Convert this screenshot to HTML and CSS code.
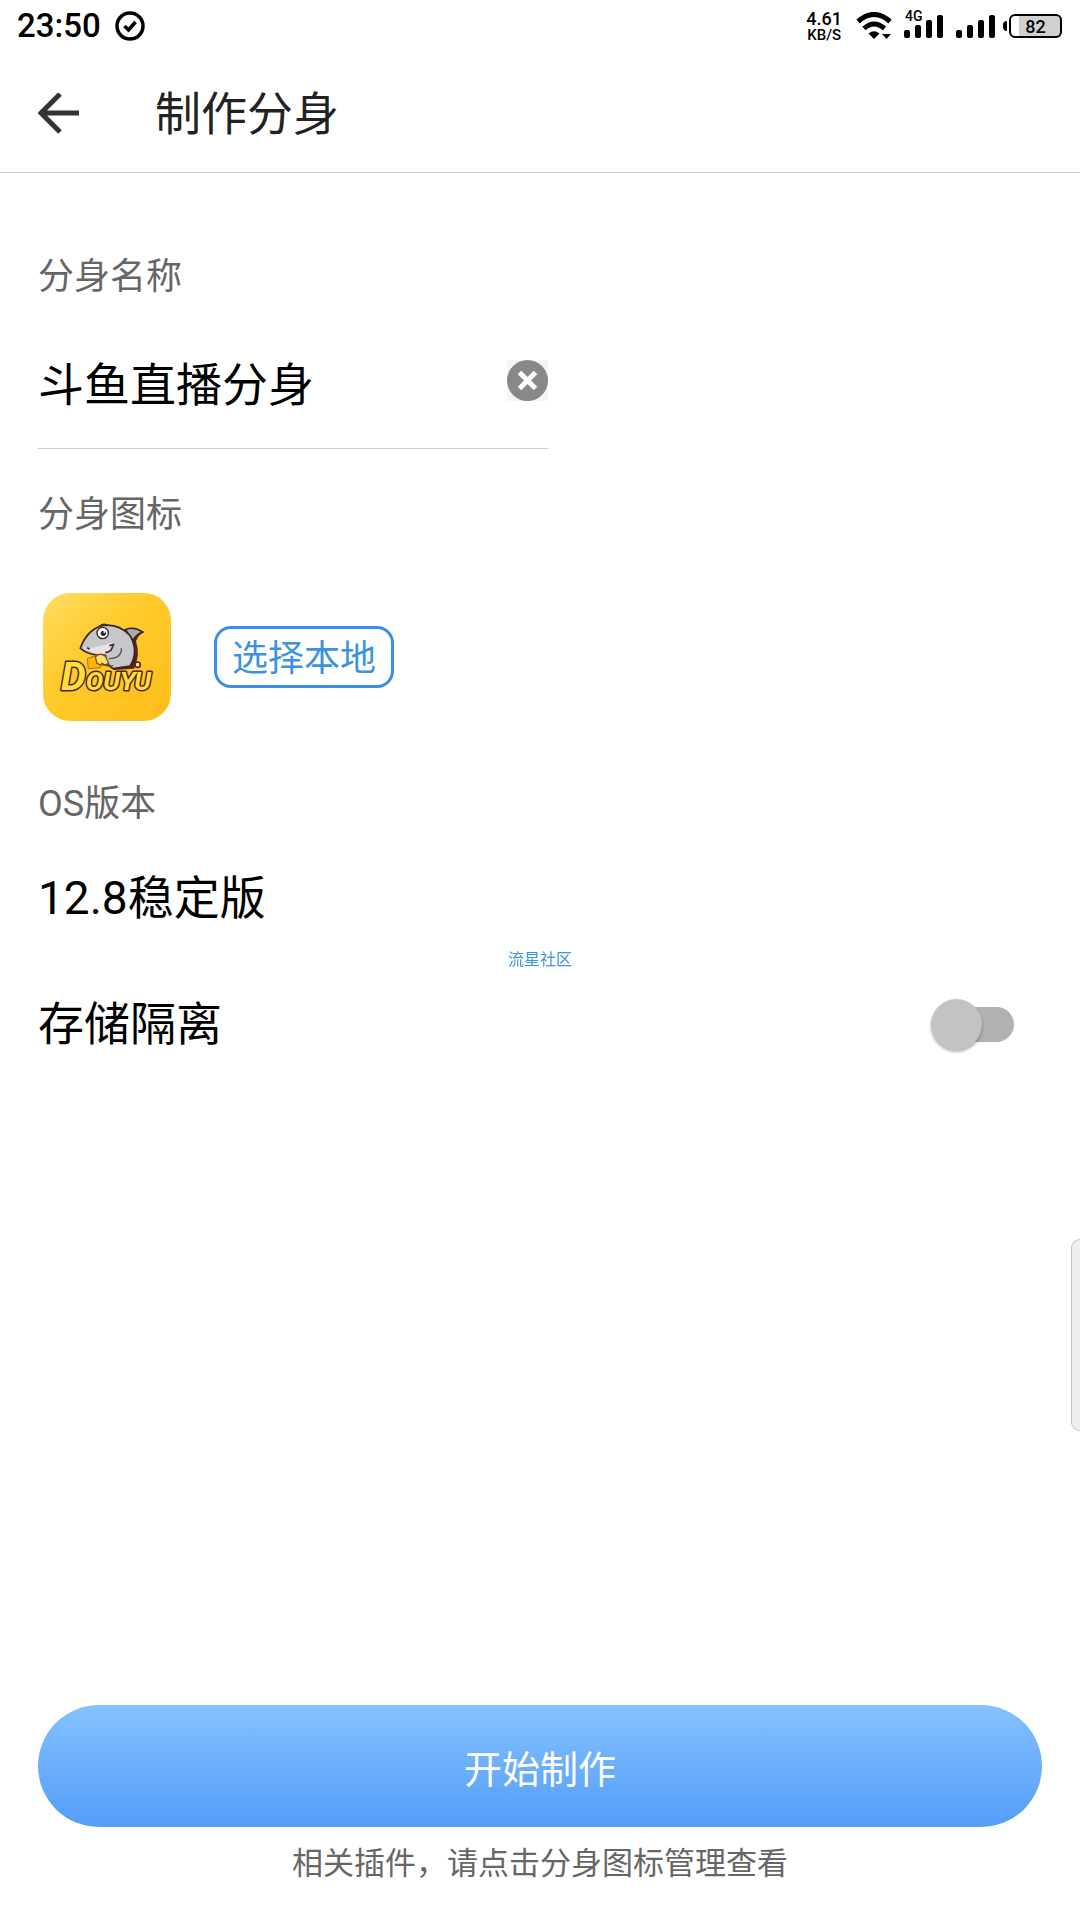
FILE: index.html
```html
<!DOCTYPE html>
<html lang="zh-CN">
<head>
<meta charset="utf-8">
<meta name="viewport" content="width=device-width, initial-scale=1">
<title>制作分身</title>
<link rel="stylesheet" href="styles.css">
</head>
<body>
<div class="status-bar">
  <span class="clock">23:50</span>
  <svg class="check-icon" width="30" height="30" viewBox="0 0 30 30" aria-hidden="true">
    <circle cx="15" cy="15" r="13" fill="none" stroke="#000" stroke-width="3.500"/>
    <path d="M9.500 15l4 4 7-8" fill="none" stroke="#000" stroke-width="3.500"/>
  </svg>
  <div class="net-speed"><span class="speed-value">4.61</span><span class="speed-unit">KB/S</span></div>
  <svg class="wifi-icon" width="36" height="28" viewBox="0 0 36 28" aria-hidden="true">
    <path d="M2 9.500Q18-4.500 34 9.500" fill="none" stroke="#000" stroke-width="5"/>
    <path d="M8 16.500Q18 7.500 28.500 16.500" fill="none" stroke="#000" stroke-width="5"/>
    <path d="M12.500 21.500Q18 17 23.500 21.500L18 27z"/>
    <path d="M26 22h9l-4.500 5z"/>
  </svg>
  <div class="signal">
    <svg width="40" height="28" viewBox="0 0 40 28" aria-hidden="true">
      <rect x="0" y="18" width="6" height="8" rx="2"/><rect x="11" y="13" width="6" height="13" rx="2"/>
      <rect x="22" y="8" width="6" height="18" rx="2"/><rect x="33" y="3" width="6" height="23" rx="2"/>
    </svg>
    <span class="signal-type">4G</span>
  </div>
  <svg class="signal-second" width="40" height="28" viewBox="0 0 40 28" aria-hidden="true">
    <rect x="0" y="18" width="6" height="8" rx="2"/><rect x="11" y="13" width="6" height="13" rx="2"/>
    <rect x="22" y="8" width="6" height="18" rx="2"/><rect x="33" y="3" width="6" height="23" rx="2"/>
  </svg>
  <div class="battery"><span class="battery-nub"></span><span class="battery-body">82</span></div>
</div>

<header class="app-bar">
  <button class="back" type="button" aria-label="返回">
    <svg width="42" height="42" viewBox="0 0 42 42" aria-hidden="true">
      <path d="M22 1L3 20l19 19M3 20h38" fill="none" stroke="#333" stroke-width="5"/>
    </svg>
  </button>
  <h1 class="title">制作分身</h1>
</header>

<main class="form">
  <label class="label" for="clone-name">分身名称</label>
  <div class="name-row">
    <input class="name-input" id="clone-name" type="text" value="斗鱼直播分身">
    <button class="clear" type="button" aria-label="清除">
      <svg width="41" height="41" viewBox="0 0 41 41" aria-hidden="true">
        <circle cx="20.500" cy="20.500" r="20.500" fill="#888"/>
        <path d="M12.500 12.500l16 16m0-16l-16 16" stroke="#fff" stroke-width="5"/>
      </svg>
    </button>
  </div>

  <h2 class="label icon-label">分身图标</h2>
  <div class="icon-row">
    <svg class="app-icon" width="128" height="128" viewBox="39 39 384 384" role="img" aria-label="斗鱼直播">
      <defs>
        <linearGradient id="tile" x1="0" y1="0" x2="1" y2="1">
          <stop offset="0" stop-color="#ffdd62"/><stop offset=".4" stop-color="#ffcb2d"/><stop offset="1" stop-color="#ffbd18"/>
        </linearGradient>
      </defs>
      <rect x="39" y="39" width="384" height="384" rx="82" fill="url(#tile)"/>
      <path d="M270 155Q300 136 342 156Q324 165 318 184Q332 225 312 266L250 270Z" fill="#54221a"/>
      <path d="M286 149Q312 138 338 156Q317 164 309 182Z" fill="#aaa9ad" stroke="#3c2420" stroke-width="5"/>
      <path d="M151 205Q170 150 218 136Q269 130 301 168Q327 215 300 258L250 266Q228 256 226 226Q180 229 151 205Z" fill="#c6c7cb" stroke="#3c2420" stroke-width="5"/>
      <path d="M158 203Q205 206 246 187Q252 202 238 218Q200 229 158 203Z" fill="#e4e4e7"/>
      <path d="M226 218Q248 216 249 193M238 197l15-4" fill="none" stroke="#54221a" stroke-width="5"/>
      <circle cx="218" cy="159" r="17" fill="#fff" stroke="#3c2420" stroke-width="4"/>
      <circle cx="220" cy="160" r="8" fill="#30201d"/><circle cx="223" cy="156" r="3" fill="#fff"/>
      <path d="M210 138q13-10 23 0" fill="none" stroke="#3c2420" stroke-width="5"/>
      <path d="M171 203l8 4" stroke="#3c2420" stroke-width="5"/>
      <path d="M172 236L201 225L212 263L175 266Z" fill="#ffb414" stroke="#b86b13" stroke-width="3"/>
      <path d="M196 231Q210 216 226 229L236 250Q219 260 201 250Z" fill="#ffe36b" stroke="#8b4a15" stroke-width="4"/>
      <path d="M274 205Q275 236 236 236M214 248Q226 260 249 257" fill="none" stroke="#5b4a48" stroke-width="4"/>
      <circle cx="323" cy="254" r="8" fill="#ffe36b" stroke="#54221a" stroke-width="5"/>
      <text class="logo-text" x="93" y="330"><tspan class="logo-initial">D</tspan>OUYU</text>
    </svg>
    <button class="choose" type="button">选择本地</button>
  </div>

  <h2 class="label os-label">OS版本</h2>
  <p class="os-value">12.8稳定版</p>

  <div class="switch-row">
    <label class="switch-label" for="isolation">存储隔离</label>
    <input class="switch" id="isolation" type="checkbox" role="switch">
  </div>
</main>

<footer class="actions">
  <button class="start" type="button">开始制作</button>
  <p class="note">相关插件，请点击分身图标管理查看</p>
</footer>

<div class="watermark">流星社区</div>
<div class="edge-handle"></div>
</body>
</html>
```
FILE: styles.css
```css
* {
  box-sizing: border-box;
}

body {
  margin: 0;
  min-height: 100vh;
  display: flex;
  flex-direction: column;
  background: #fff;
  color: #000;
  font-family: Roboto, "Noto Sans CJK SC", sans-serif;
}

h1, h2, p {
  margin: 0;
  font-weight: 400;
}

button, input {
  margin: 0;
  padding: 0;
  border: 0;
  background: none;
  color: inherit;
  font: inherit;
}

svg {
  display: block;
  flex: none;
}

/* Status bar */
.status-bar {
  display: flex;
  align-items: center;
  height: 52px;
  padding: 0 18px 0 17px;
  font-weight: 500;
}

.clock {
  font-size: 33px;
  line-height: 40px;
}

.check-icon {
  margin-left: 14px;
}

.net-speed {
  display: flex;
  flex-direction: column;
  align-items: center;
  margin-left: auto;
}

.speed-value {
  font-size: 18px;
  line-height: 18px;
}

.speed-unit {
  font-size: 15px;
  line-height: 14px;
}

.wifi-icon {
  margin-left: 14px;
}

.signal {
  position: relative;
  margin-left: 12px;
}

.signal-type {
  position: absolute;
  top: -3px;
  left: 1px;
  font-size: 14px;
  line-height: 14px;
}

.signal-second {
  margin-left: 12px;
}

.battery {
  display: flex;
  align-items: center;
  gap: 2px;
  margin-left: 7px;
}

.battery-nub {
  width: 4px;
  height: 10px;
  border-radius: 4px 0 0 4px;
  background: #000;
}

.battery-body {
  width: 53px;
  height: 24px;
  border: 2px solid #000;
  border-radius: 6px;
  background: linear-gradient(to right, #fff 16%, #d0d0d0 16%);
  font-size: 18px;
  line-height: 21px;
  text-align: center;
}

/* App bar */
.app-bar {
  display: flex;
  align-items: center;
  gap: 75px;
  height: 121px;
  padding: 4px 38px 0;
  border-bottom: 1px solid #ccc;
}

.title {
  color: #222;
  font-size: 46px;
  line-height: 58px;
}

/* Form */
.form {
  padding: 82px 38px 0;
}

.label {
  display: block;
  color: #666;
  font-size: 36px;
  line-height: 44px;
}

.name-row {
  display: flex;
  align-items: center;
  width: 50.8%;
  height: 136px;
  margin-top: 14px;
  border-bottom: 1px solid #ccc;
}

.name-input {
  flex: 1;
  min-width: 0;
  height: 62px;
  font-size: 46px;
  outline: 0;
}

.clear {
  background: #f5f5f5;
}

.icon-label {
  margin-top: 44px;
}

.icon-row {
  display: flex;
  align-items: center;
  gap: 43px;
  margin-top: 56px;
  padding-left: 5px;
}

.logo-text {
  fill: #ffe03a;
  stroke: #54221a;
  stroke-width: 9px;
  stroke-linejoin: round;
  paint-order: stroke;
  font-family: Roboto, sans-serif;
  font-size: 78px;
  font-style: italic;
  font-weight: 700;
}

.logo-initial {
  font-size: 118px;
}

.choose {
  height: 62px;
  padding: 4px 15px 0;
  border: 3px solid #3b8ee8;
  border-radius: 17px;
  color: #3b93e0;
  font-size: 36px;
  line-height: 52px;
}

.os-label {
  margin-top: 61px;
}

.os-value {
  margin-top: 44px;
  font-size: 46px;
  line-height: 56px;
}

.switch-row {
  display: flex;
  align-items: center;
  justify-content: space-between;
  margin-top: 70px;
  padding-right: 28px;
}

.switch-label {
  font-size: 46px;
  line-height: 56px;
}

.switch {
  position: relative;
  display: flex;
  align-items: center;
  width: 83px;
  height: 52px;
  appearance: none;
}

.switch::before {
  content: "";
  position: absolute;
  inset: 9px 0 8px 16px;
  border-radius: 18px;
  background: #b1b1b1;
}

.switch::after {
  content: "";
  position: relative;
  width: 51px;
  height: 51px;
  border-radius: 50%;
  background: #c3c3c3;
  box-shadow: 0 2px 3px rgba(0, 0, 0, .3);
}

.switch:checked::after {
  margin-left: auto;
}

/* Bottom action */
.actions {
  margin-top: auto;
  padding: 40px 38px 38px;
  text-align: center;
}

.start {
  display: block;
  width: 100%;
  height: 122px;
  border-radius: 61px;
  background: linear-gradient(#84c1ff, #539df8);
  color: #fff;
  font-size: 38px;
}

.note {
  margin-top: 19px;
  color: #666;
  font-size: 31px;
  line-height: 36px;
}

/* Overlays */
.watermark {
  position: fixed;
  inset: 0;
  display: grid;
  place-items: center;
  color: #3b93e8;
  font-size: 16px;
  line-height: 20px;
  pointer-events: none;
}

.edge-handle {
  position: fixed;
  top: 1239px;
  right: 0;
  width: 9px;
  height: 192px;
  border: 1px solid #c4c4c4;
  border-right: 0;
  border-radius: 10px 0 0 10px;
  background: #eee;
}
```
